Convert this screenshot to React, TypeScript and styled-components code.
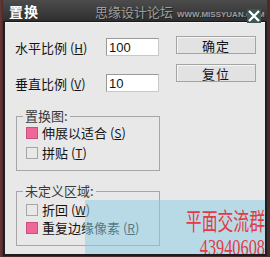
import styled, { createGlobalStyle } from "styled-components";

const GlobalStyle = createGlobalStyle`
  html, body {
    margin: 0;
    padding: 0;
    background: #4a2e2e;
  }
  body {
    font-family: 'Noto Sans CJK SC', 'Noto Sans', sans-serif;
  }
`

const Screen = styled.div`
  position: relative;
  width: 270px;
  height: 257px;
  overflow: hidden;
  background: linear-gradient(90deg, #6a3a36 0px, #4a2a2a 3px);
`

const Window = styled.div`
  margin-left: 3px;
  width: 264px;
  height: 256px;
  background: #1e1e22;
  display: flex;
  flex-direction: column;
`

const TitleBar = styled.div`
  position: relative;
  height: 21px;
  display: flex;
  align-items: center;
  padding-left: 6px;
  background: linear-gradient(#4c4c4c, #2f2f2f);
  border-bottom: 1px solid #1a1a1a;
`

const TitleText = styled.span`
  color: #ffffff;
  font-size: 14px;
  font-weight: 700;
  letter-spacing: 1px;
`

const SiteMark = styled.div`
  position: absolute;
  left: 92px;
  top: 4px;
  display: flex;
  align-items: baseline;
  gap: 4px;
  color: #9c9c9c;
  white-space: nowrap;
  text-shadow: 1px 1px 0 #222;
`

const SiteName = styled.span`
  font-size: 13px;
  line-height: 15px;
`

const SiteUrl = styled.span`
  font-family: 'Liberation Sans', sans-serif;
  font-size: 8px;
  font-weight: 700;
`

const CloseBox = styled.div`
  position: absolute;
  z-index: 1;
  right: 6px;
  top: 4px;
  width: 14px;
  height: 14px;
`

const Body = styled.div`
  position: relative;
  flex: 1;
  margin-left: 2px;
  width: 260px;
  margin-bottom: 2px;
  background: #e8e8e8;
  border-top: 1px solid #f4f4f4;
  color: #141414;
  font-size: 13px;
  display: flex;
  flex-direction: column;
`

const TopArea = styled.div`
  display: flex;
  padding: 13px 0 0 10px;
`

const FieldColumn = styled.div`
  display: flex;
  flex-direction: column;
  gap: 18px;
  margin-top: 2px;
  width: 161px;
`

const FieldRow = styled.div`
  display: flex;
  align-items: center;
  height: 18px;
`

const FieldLabel = styled.span`
  width: 91px;
  line-height: 18px;
  padding-top: 1px;
  white-space: nowrap;
`

const Key = styled.span`
  font-size: 12px;
  text-decoration: underline;
  text-underline-offset: 1px;
`

const NumberInput = styled.div`
  width: 49px;
  height: 16px;
  background: #ffffff;
  border: 1px solid #9a9a9a;
  border-right-color: #c8c8c8;
  border-bottom-color: #c8c8c8;
  padding-left: 2px;
  font-family: 'Liberation Sans', sans-serif;
  font-size: 13px;
  line-height: 17px;
`

const ButtonColumn = styled.div`
  display: flex;
  flex-direction: column;
  gap: 10px;
`

const Button = styled.div`
  width: 78px;
  height: 16px;
  display: flex;
  align-items: center;
  justify-content: center;
  background: #e2e2e2;
  border: 1px solid #a4a4a4;
  box-shadow: inset 1px 1px 0 #f6f6f6;
  font-size: 13px;
  letter-spacing: 1px;
`

const Group = styled.div<{ $top: number; $pad: number; $gap: number }>`
  position: relative;
  box-sizing: border-box;
  margin: ${p => p.$top}px 0 0 11px;
  width: 144px;
  height: 55px;
  border: 1px solid #a6a6a6;
  padding: ${p => p.$pad}px 0 0 9px;
  display: flex;
  flex-direction: column;
  gap: ${p => p.$gap}px;
`

const Legend = styled.span`
  position: absolute;
  left: 6px;
  top: -9px;
  padding: 0 2px;
  background: #e8e8e8;
  color: #3a3a3a;
  line-height: 16px;
`

const OptionRow = styled.div`
  display: flex;
  align-items: center;
  gap: 4px;
  height: 12px;
  white-space: nowrap;
`

const Box = styled.span<{ $on?: boolean }>`
  width: 10px;
  height: 10px;
  flex: none;
  background: ${p => (p.$on ? "#f0689a" : "#e8e8e8")};
  border: 1px solid ${p => (p.$on ? "#c94f7c" : "#a6a6a6")};
`

const OptionText = styled.span`
  line-height: 16px;
`

const Stamp = styled.div`
  position: absolute;
  left: 80px;
  top: 177px;
  right: 0;
  bottom: 0;
  background: rgba(140, 205, 228, 0.52);
  overflow: hidden;
  display: flex;
  flex-direction: column;
  align-items: flex-end;
`

const StampTitle = styled.span`
  color: #e23a44;
  font-size: 24px;
  line-height: 24px;
  margin-top: 8px;
  transform: scaleX(0.66);
  transform-origin: right center;
  white-space: nowrap;
`

const StampNumber = styled.span`
  color: #e23a44;
  font-family: 'Liberation Serif', serif;
  font-size: 24px;
  line-height: 20px;
  margin-top: 5px;
  transform: scaleX(0.68);
  transform-origin: right center;
`

function CloseIcon() {
  return (
    <CloseBox>
      <svg width="14" height="14" viewBox="0 0 14 14">
        <rect x="0" y="0" width="14" height="14" fill="#3f5652" />
        <path d="M2 2 L12 12 M12 2 L2 12" stroke="#ffffff" strokeWidth="2.4" />
      </svg>
    </CloseBox>
  );
}

function App() {
  return (
    <>
      <GlobalStyle />
      <Screen>
        <Window>
          <TitleBar>
            <TitleText>置换</TitleText>
            <SiteMark>
              <SiteName>思缘设计论坛</SiteName>
              <SiteUrl>WWW.MISSYUAN.COM</SiteUrl>
            </SiteMark>
            <CloseIcon />
          </TitleBar>
          <Body>
            <TopArea>
              <FieldColumn>
                <FieldRow>
                  <FieldLabel>水平比例 (<Key>H</Key>)</FieldLabel>
                  <NumberInput>100</NumberInput>
                </FieldRow>
                <FieldRow>
                  <FieldLabel>垂直比例 (<Key>V</Key>)</FieldLabel>
                  <NumberInput>10</NumberInput>
                </FieldRow>
              </FieldColumn>
              <ButtonColumn>
                <Button>确定</Button>
                <Button>复位</Button>
              </ButtonColumn>
            </TopArea>
            <Group $top={24} $pad={10} $gap={8}>
              <Legend>置换图:</Legend>
              <OptionRow>
                <Box $on />
                <OptionText>伸展以适合 (<Key>S</Key>)</OptionText>
              </OptionRow>
              <OptionRow>
                <Box />
                <OptionText>拼贴 (<Key>T</Key>)</OptionText>
              </OptionRow>
            </Group>
            <Group $top={20} $pad={12} $gap={6}>
              <Legend>未定义区域:</Legend>
              <OptionRow>
                <Box />
                <OptionText>折回 (<Key>W</Key>)</OptionText>
              </OptionRow>
              <OptionRow>
                <Box $on />
                <OptionText>重复边缘像素 (<Key>R</Key>)</OptionText>
              </OptionRow>
            </Group>
            <Stamp>
              <StampTitle>平面交流群</StampTitle>
              <StampNumber>43940608</StampNumber>
            </Stamp>
          </Body>
        </Window>
      </Screen>
    </>
  );
}

export default App;
